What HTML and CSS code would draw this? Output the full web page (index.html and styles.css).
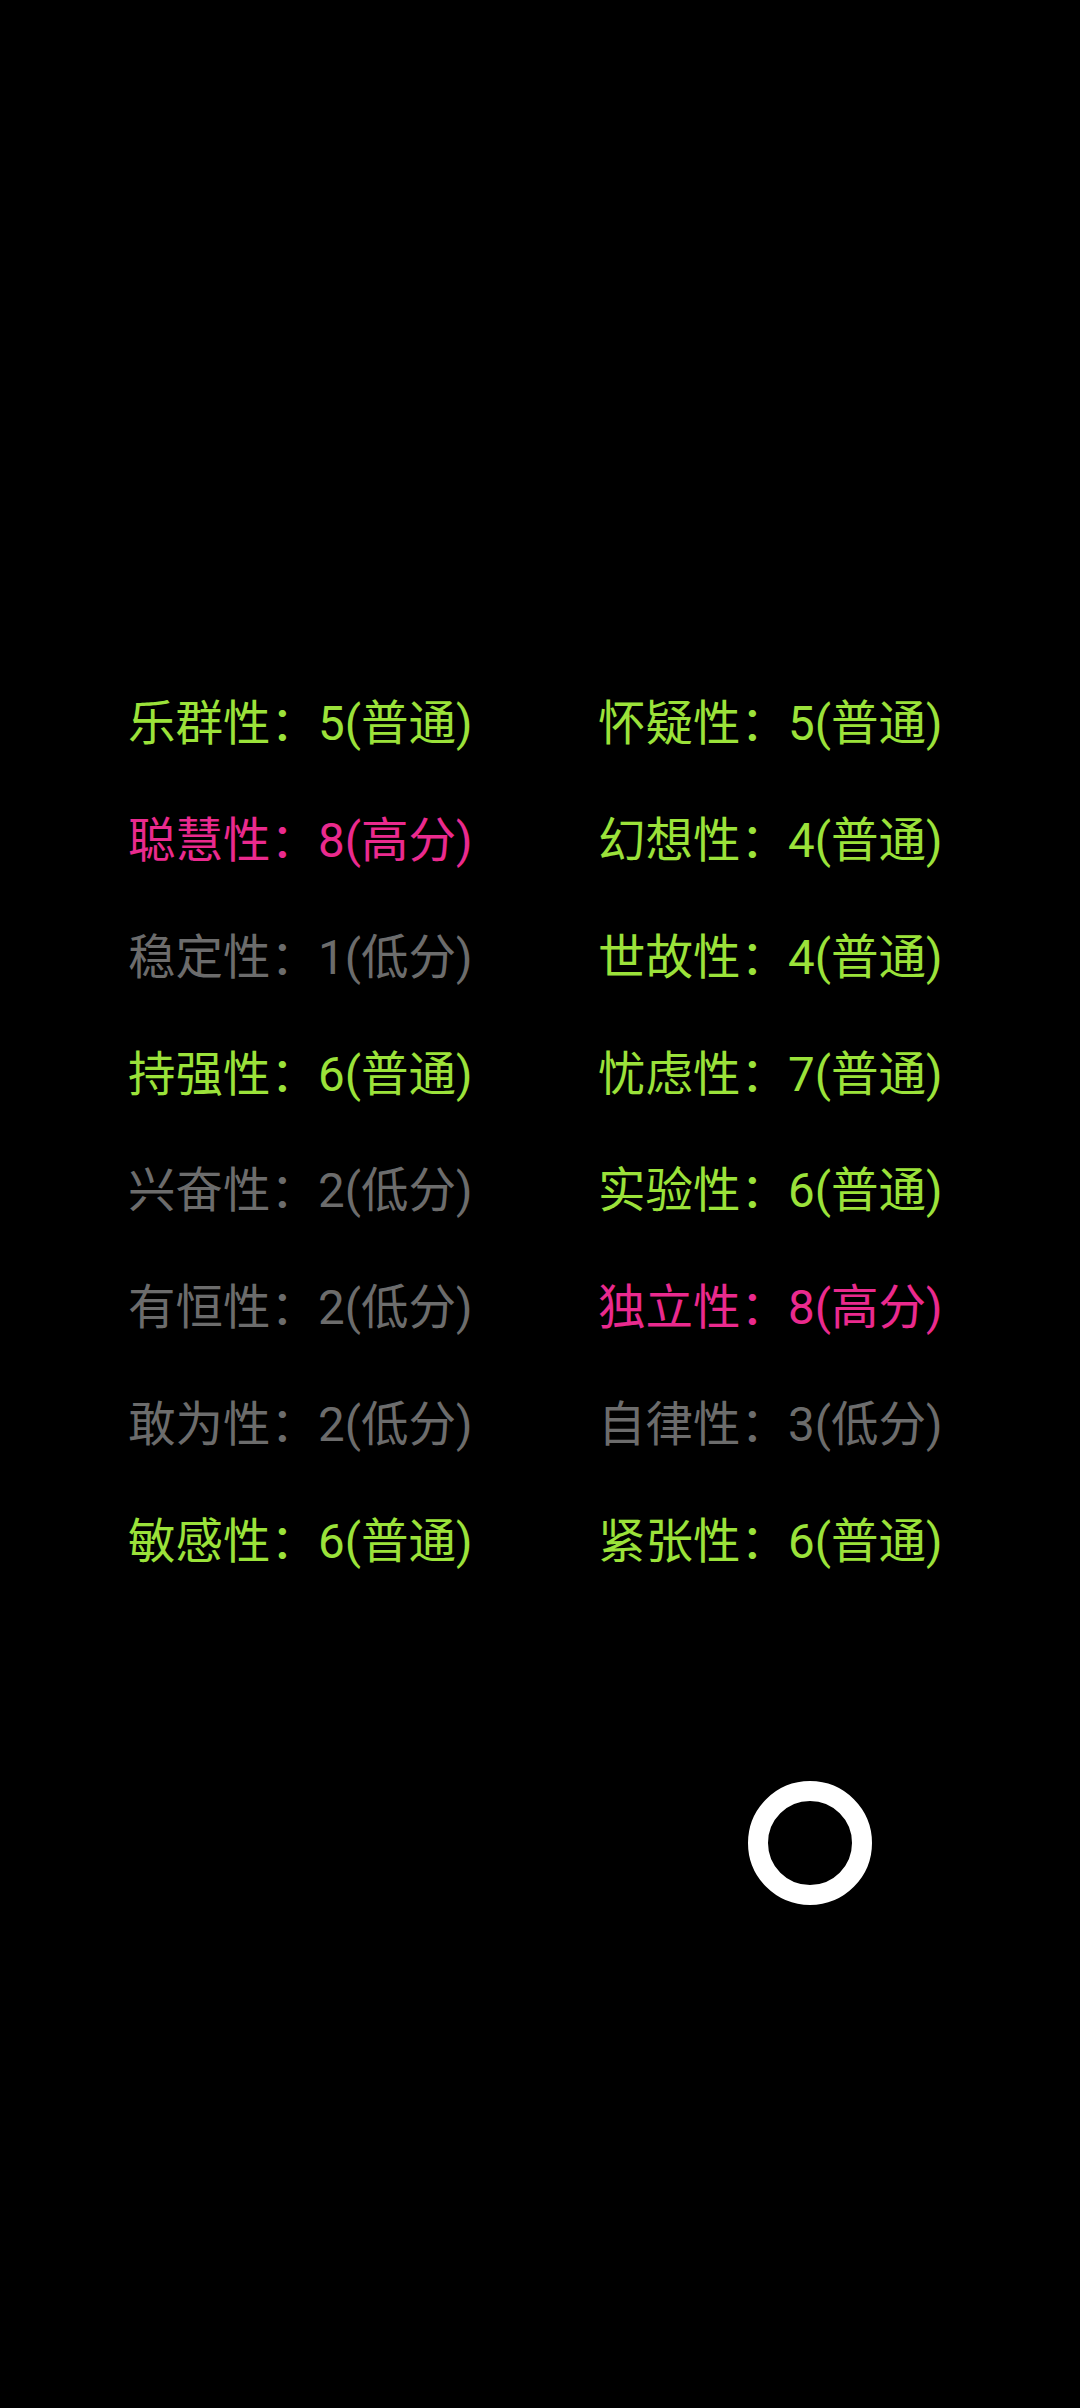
FILE: index.html
```html
<!DOCTYPE html>
<html lang="zh-CN">
<head>
<meta charset="utf-8">
<title>16PF</title>
<link rel="stylesheet" href="styles.css">
</head>
<body>
<main class="screen">
  <section class="grid">
    <div class="item mid">乐群性：5(普通)</div>
    <div class="item mid">怀疑性：5(普通)</div>
    <div class="item high">聪慧性：8(高分)</div>
    <div class="item mid">幻想性：4(普通)</div>
    <div class="item low">稳定性：1(低分)</div>
    <div class="item mid">世故性：4(普通)</div>
    <div class="item mid">持强性：6(普通)</div>
    <div class="item mid">忧虑性：7(普通)</div>
    <div class="item low">兴奋性：2(低分)</div>
    <div class="item mid">实验性：6(普通)</div>
    <div class="item low">有恒性：2(低分)</div>
    <div class="item high">独立性：8(高分)</div>
    <div class="item low">敢为性：2(低分)</div>
    <div class="item low">自律性：3(低分)</div>
    <div class="item mid">敏感性：6(普通)</div>
    <div class="item mid">紧张性：6(普通)</div>
  </section>
  <div class="ring-row">
    <div class="ring"></div>
  </div>
</main>
</body>
</html>
```

FILE: styles.css
```css
html, body {
  margin: 0;
  padding: 0;
  background: #000;
}
.screen {
  width: 1080px;
  height: 2408px;
  background: #000;
  font-family: Roboto, "Noto Sans CJK SC", sans-serif;
}
.grid {
  display: grid;
  grid-template-columns: 470px 470px;
  padding: 666px 0 0 128px;
  grid-auto-rows: 116.86px;
}
.item {
  font-size: 47.5px;
  line-height: 116.86px;
  white-space: nowrap;
}
.mid { color: #9be23a; }
.high { color: #ea2a8e; }
.low { color: #6c6c6c; }
.ring-row {
  display: flex;
  padding: 180px 0 0 748px;
}
.ring {
  width: 84px;
  height: 84px;
  border: 20.5px solid #fff;
  border-radius: 50%;
}
```
